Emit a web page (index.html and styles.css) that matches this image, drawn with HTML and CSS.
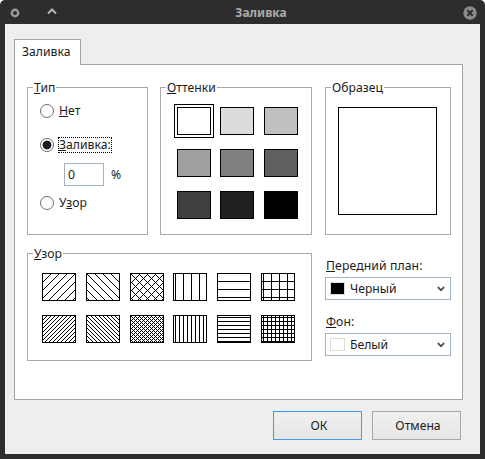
FILE: index.html
```html
<!DOCTYPE html>
<html lang="ru">
<head>
  <meta charset="UTF-8">
  <meta name="viewport" content="width=device-width, initial-scale=1.0">
  <title>Заливка</title>
  <link rel="stylesheet" href="styles.css">
</head>
<body>
  <div class="window">
    <header class="titlebar">
      <div class="title-left">
        <svg class="title-icon" width="10" height="10" viewBox="0 0 10 10"><circle cx="5" cy="5" r="3.2" fill="none" stroke="#9a9a9a" stroke-width="2.4"/></svg>
        <svg class="title-icon chevron" width="10" height="7" viewBox="0 0 10 7"><path d="M1 5.5l4-4 4 4" fill="none" stroke="#b5b5b5" stroke-width="2"/></svg>
      </div>
      <div class="title-text">Заливка</div>
      <div class="title-right">
        <svg width="14" height="14" viewBox="0 0 14 14"><circle cx="7" cy="7" r="6.7" fill="#8a8a8a"/><path d="M4.3 4.3l5.4 5.4M9.7 4.3l-5.4 5.4" stroke="#2d2d2d" stroke-width="2"/></svg>
      </div>
    </header>

    <div class="dialog">
      <div class="tabs"><div class="tab">Заливка</div></div>

      <div class="panel">
        <div class="col-left">
          <div class="top-row">
            <fieldset class="group type-group">
              <legend><u>Т</u>ип</legend>
              <div class="type-body">
                <label class="radio row-none"><input type="radio" name="kind"><span><u>Н</u>ет</span></label>
                <label class="radio row-fill"><input type="radio" name="kind" checked><span class="focused"><u>З</u>аливка:</span></label>
                <div class="percent"><input type="text" value="0"><span>%</span></div>
                <label class="radio row-pattern"><input type="radio" name="kind"><span>У<u>з</u>ор</span></label>
              </div>
            </fieldset>

            <fieldset class="group shade-group">
              <legend><u>О</u>ттенки</legend>
              <div class="shades">
                <div class="shade selected s0"></div>
                <div class="shade s1"></div>
                <div class="shade s2"></div>
                <div class="shade s3"></div>
                <div class="shade s4"></div>
                <div class="shade s5"></div>
                <div class="shade s6"></div>
                <div class="shade s7"></div>
                <div class="shade s8"></div>
              </div>
            </fieldset>
          </div>

          <fieldset class="group pattern-group">
            <legend><u>У</u>зор</legend>
            <div class="patterns">
              <svg class="tile"><rect width="32" height="26" fill="url(#p-fwd)"/></svg>
              <svg class="tile"><rect width="32" height="26" fill="url(#p-back)"/></svg>
              <svg class="tile"><rect width="32" height="26" fill="url(#p-cross)"/></svg>
              <svg class="tile"><rect width="32" height="26" fill="url(#p-vert)"/></svg>
              <svg class="tile"><rect width="32" height="26" fill="url(#p-horz)"/></svg>
              <svg class="tile"><rect width="32" height="26" fill="url(#p-grid)"/></svg>
              <svg class="tile"><rect width="32" height="26" fill="url(#p-fwd2)"/></svg>
              <svg class="tile"><rect width="32" height="26" fill="url(#p-back2)"/></svg>
              <svg class="tile"><rect width="32" height="26" fill="url(#p-cross2)"/></svg>
              <svg class="tile"><rect width="32" height="26" fill="url(#p-vert2)"/></svg>
              <svg class="tile"><rect width="32" height="26" fill="url(#p-horz2)"/></svg>
              <svg class="tile"><rect width="32" height="26" fill="url(#p-grid2)"/></svg>
            </div>
          </fieldset>
        </div>

        <div class="col-right">
          <fieldset class="group sample-group">
            <legend>Образец</legend>
            <div class="sample"></div>
          </fieldset>

          <div class="color-label first"><u>П</u>ередний план:</div>
          <div class="combo">
            <span class="chip black"></span>
            <span class="combo-text">Черный</span>
            <svg width="8" height="6" viewBox="0 0 8 6"><path d="M.8 1l3.2 3.2L7.200 1" fill="none" stroke="#555" stroke-width="1.800"/></svg>
          </div>

          <div class="color-label"><u>Ф</u>он:</div>
          <div class="combo">
            <span class="chip white"></span>
            <span class="combo-text">Белый</span>
            <svg width="8" height="6" viewBox="0 0 8 6"><path d="M.8 1l3.2 3.2L7.200 1" fill="none" stroke="#555" stroke-width="1.800"/></svg>
          </div>
        </div>
      </div>

      <div class="buttons">
        <button class="default" type="button">ОК</button>
        <button type="button">Отмена</button>
      </div>
    </div>
  </div>

  <svg class="defs" width="0" height="0">
    <defs>
      <pattern id="p-fwd" width="8" height="8" patternUnits="userSpaceOnUse"><path d="M0 7h1v1H0zM1 6h1v1H1zM2 5h1v1H2zM3 4h1v1H3zM4 3h1v1H4zM5 2h1v1H5zM6 1h1v1H6zM7 0h1v1H7z"/></pattern>
      <pattern id="p-back" width="8" height="8" patternUnits="userSpaceOnUse"><path d="M0 0h1v1H0zM1 1h1v1H1zM2 2h1v1H2zM3 3h1v1H3zM4 4h1v1H4zM5 5h1v1H5zM6 6h1v1H6zM7 7h1v1H7z"/></pattern>
      <pattern id="p-cross" width="8" height="8" patternUnits="userSpaceOnUse"><path d="M0 0h1v1H0zM1 7h1v1H1zM2 6h1v1H2zM3 5h1v1H3zM4 4h1v1H4zM5 3h1v1H5zM6 2h1v1H6zM7 1h1v1H7zM1 1h1v1H1zM2 2h1v1H2zM3 3h1v1H3zM5 5h1v1H5zM6 6h1v1H6zM7 7h1v1H7z"/></pattern>
      <pattern id="p-vert" width="8" height="8" patternUnits="userSpaceOnUse"><path d="M1 0h1v8H1z"/></pattern>
      <pattern id="p-horz" width="8" height="8" patternUnits="userSpaceOnUse"><path d="M0 7h8v1H0z"/></pattern>
      <pattern id="p-grid" width="8" height="8" patternUnits="userSpaceOnUse"><path d="M1 0h1v8H1zM0 7h8v1H0z"/></pattern>
      <pattern id="p-fwd2" width="4" height="4" patternUnits="userSpaceOnUse"><path d="M0 3h1v1H0zM1 2h1v1H1zM2 1h1v1H2zM3 0h1v1H3z"/></pattern>
      <pattern id="p-back2" width="4" height="4" patternUnits="userSpaceOnUse"><path d="M0 0h1v1H0zM1 1h1v1H1zM2 2h1v1H2zM3 3h1v1H3z"/></pattern>
      <pattern id="p-cross2" width="4" height="4" patternUnits="userSpaceOnUse"><path d="M0 0h1v1H0zM1 1h1v1H1zM3 1h1v1H3zM2 2h1v1H2zM1 3h1v1H1zM3 3h1v1H3z"/></pattern>
      <pattern id="p-vert2" width="4" height="4" patternUnits="userSpaceOnUse"><path d="M1 0h1v4H1z"/></pattern>
      <pattern id="p-horz2" width="4" height="4" patternUnits="userSpaceOnUse"><path d="M0 1h4v1H0z"/></pattern>
      <pattern id="p-grid2" width="4" height="4" patternUnits="userSpaceOnUse"><path d="M1 0h1v4H1zM0 1h4v1H0z"/></pattern>
    </defs>
  </svg>
</body>
</html>
```

FILE: styles.css
```css
html {
  background-color: #fff;
}
body {
  margin: 0;
  font-family: 'Noto Sans', sans-serif;
  font-size: 12.2px;
  line-height: 16px;
  color: #1c1c1c;
}
.window {
  width: 485px;
  height: 459px;
  box-sizing: border-box;
  padding: 0 5px 5px;
  background-color: #2d2d2d;
  border-radius: 5px 5px 0 0;
  overflow: hidden;
}
.titlebar {
  height: 24px;
  margin: 0 -5px;
  display: flex;
  align-items: center;
  padding-top: 2px;
  box-sizing: border-box;
}
.title-left {
  width: 62px;
  flex: none;
  display: flex;
  align-items: center;
  padding-left: 10px;
  box-sizing: border-box;
}
.title-icon.chevron {
  margin-left: 27px;
  margin-top: -3px;
}
.title-text {
  flex: 1;
  text-align: center;
  font-size: 12px;
  font-weight: bold;
  color: #a9a9a9;
}
.title-right {
  width: 25px;
  flex: none;
  display: flex;
}
.title-right svg {
  margin-left: 3px;
}
.dialog {
  height: 430px;
  box-sizing: border-box;
  padding: 15px 17px 15px 9px;
  background-color: #eeeeee;
}
.tabs {
  display: flex;
}
.tab {
  width: 67px;
  height: 26px;
  box-sizing: border-box;
  margin-bottom: -1px;
  border: 1px solid #a5a5a5;
  border-bottom: 0;
  background-color: #fff;
  padding: 4px 0 0 7px;
  position: relative;
  z-index: 1;
}
.panel {
  height: 336px;
  box-sizing: border-box;
  border: 1px solid #a5a5a5;
  background-color: #fff;
  padding: 15px 0 0 12px;
  display: flex;
  gap: 13px;
}
.col-left {
  width: 285px;
  display: flex;
  flex-direction: column;
  gap: 11px;
}
.col-right {
  width: 126px;
}
.top-row {
  display: flex;
  gap: 12px;
}
.group {
  margin: 0;
  padding: 0;
  min-width: 0;
  box-sizing: border-box;
  border: 1px solid #a8a8a8;
}
.group legend {
  margin-left: 5px;
  padding: 0 1px;
  height: 15px;
  line-height: 15px;
}
.type-group {
  width: 121px;
  height: 155px;
}
.type-body {
  padding-left: 12px;
}
.radio {
  display: flex;
  align-items: center;
  gap: 5px;
  height: 16px;
}
.radio input {
  appearance: none;
  width: 14px;
  height: 14px;
  margin: 0;
  flex: none;
  border: 1px solid #6e6e6e;
  border-radius: 50%;
  background-color: #fff;
}
.radio input:checked {
  background-image: radial-gradient(circle, #1c1c1c 0, #1c1c1c 4px, #fff 4.8px);
}
.row-none {
  margin-top: 8px;
}
.row-fill {
  margin-top: 18px;
}
.row-pattern {
  margin-top: 9px;
}
.focused {
  border: 1px dotted #000;
  margin-left: -1px;
  height: 14px;
  line-height: 14px;
}
.percent {
  display: flex;
  align-items: center;
  gap: 7px;
  margin: 10px 0 0 24px;
}
.percent input {
  width: 40px;
  height: 23px;
  box-sizing: border-box;
  border: 1px solid #a3b2c6;
  padding: 0 3px;
  font: inherit;
  color: inherit;
}
.shade-group {
  width: 152px;
  height: 155px;
}
.shades {
  display: grid;
  grid-template-columns: repeat(3, 34px);
  grid-auto-rows: 28px;
  column-gap: 9.4px;
  row-gap: 14px;
  padding: 12px 0 0 16px;
}
.shade {
  border: 1px solid #000;
  box-sizing: border-box;
}
.shade.selected {
  outline: 1px solid #000;
  outline-offset: 2px;
}
.s0 { background-color: #fff; }
.s1 { background-color: #dcdcdc; }
.s2 { background-color: #c0c0c0; }
.s3 { background-color: #a0a0a0; }
.s4 { background-color: #808080; }
.s5 { background-color: #606060; }
.s6 { background-color: #404040; }
.s7 { background-color: #202020; }
.s8 { background-color: #000; }
.pattern-group {
  height: 115px;
}
.patterns {
  display: grid;
  grid-template-columns: repeat(6, 34px);
  grid-auto-rows: 28px;
  column-gap: 9.8px;
  row-gap: 14px;
  padding: 12px 0 0 14px;
}
.tile {
  width: 34px;
  height: 28px;
  box-sizing: border-box;
  border: 1px solid #000;
  background-color: #fff;
  display: block;
}
.sample-group {
  height: 155px;
}
.sample {
  width: 99px;
  height: 108px;
  margin: 12px 0 0 12px;
  box-sizing: border-box;
  border: 1px solid #000;
}
.color-label {
  height: 16px;
  margin-top: 14px;
  padding-left: 1px;
  letter-spacing: 0.12px;
}
.color-label.first {
  margin-top: 23px;
}
.combo {
  height: 23px;
  margin-top: 3px;
  box-sizing: border-box;
  border: 1px solid #a3b2c6;
  display: flex;
  align-items: center;
  padding: 0 5px 0 4px;
}
.chip {
  width: 15px;
  height: 13px;
  flex: none;
  box-sizing: border-box;
  border: 1px solid #dcdcdc;
}
.chip.black {
  background-color: #000;
}
.combo-text {
  flex: 1;
  margin-left: 5px;
}
.buttons {
  display: flex;
  justify-content: flex-end;
  gap: 10px;
  margin-top: 11px;
  padding-right: 2px;
}
.buttons button {
  width: 89px;
  height: 29px;
  box-sizing: border-box;
  border: 1px solid #a8a8a8;
  border-radius: 0;
  padding: 0 0 0 3px;
  background: linear-gradient(#f0f0f0, #e6e6e6);
  font: inherit;
  color: inherit;
}
.buttons .default {
  border-color: #3d9bf0;
}
.defs {
  display: block;
}
```
